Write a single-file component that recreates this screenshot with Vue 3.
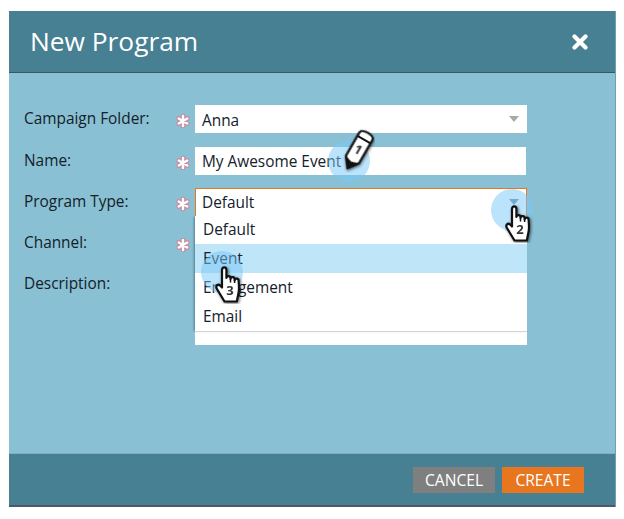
<script setup>
const rows = [
  { label: 'Campaign Folder:', req: true },
  { label: 'Name:', req: true },
  { label: 'Program Type:', req: true },
  { label: 'Channel:', req: true },
  { label: 'Description:', req: false }
]
const options = ['Default', 'Event', 'Engagement', 'Email']
</script>

<template>
  <div class="page">
    <div class="dialog">
      <header class="head">
        <h1>New Program</h1>
        <svg class="close" viewBox="0 0 16 16" width="16" height="16"><path d="M2.500 2.500l11 11M13.500 2.500l-11 11" stroke="#fff" stroke-width="4.200" fill="none" stroke-linecap="round" /></svg>
      </header>
      <main class="body">
        <div class="row" v-for="(r, i) in rows" :key="r.label" :class="'row' + i">
          <label>{{ r.label }}</label>
          <span class="req">
            <svg v-if="r.req" viewBox="0 0 16 16" width="16" height="16">
              <g stroke="#c98a9c" stroke-width="4.600" stroke-linecap="round"><path d="M8 3v10M3.700 5.500l8.600 5M12.300 5.500l-8.600 5" /></g>
              <g stroke="#fff" stroke-width="2.400" stroke-linecap="round"><path d="M8 3v10M3.700 5.500l8.600 5M12.300 5.500l-8.600 5" /></g>
            </svg>
          </span>
          <div v-if="i === 0" class="field select"><span>Anna</span><i class="caret"></i></div>
          <div v-else-if="i === 1" class="field name"><span>My Awesome Event</span></div>
          <div v-else-if="i === 2" class="field select open">
            <span>Default</span><i class="caret"></i>
            <ul class="menu">
              <li v-for="o in options" :key="o" :class="{ active: o === 'Event' }">{{ o }}</li>
            </ul>
          </div>
          <div v-else-if="i === 3" class="field"></div>
          <div v-else class="field area"></div>
        </div>
      </main>
      <footer class="foot">
        <button class="btn cancel">CANCEL</button>
        <button class="btn create">CREATE</button>
      </footer>
    </div>

    <span class="spot s1"></span>
    <span class="spot s2"></span>
    <span class="spot s3"></span>

    <svg class="pencil" viewBox="0 0 34 46" width="34" height="46">
      <g transform="rotate(30 17 23)" class="shadow">
        <path d="M9.500 7c0-5 15-5 15 0v27L17 44 9.500 34z" fill="#fff" stroke="#111" stroke-width="2.200" stroke-linejoin="round" />
        <path d="M9.500 11h15" stroke="#111" stroke-width="2" />
        <path d="M9.500 34l7.500 2.500 7.500-2.500L17 44z" fill="#111" />
        <text x="17" y="27" class="num" text-anchor="middle">1</text>
      </g>
    </svg>

    <svg v-for="h in [{ c: 'h2', n: 2 }, { c: 'h3', n: 3 }]" :key="h.c" class="hand" :class="h.c" viewBox="0 0 30 38" width="30" height="38">
      <g class="shadow">
        <path d="M7 4c0-3.600 4.400-3.600 4.400 0v8c0-2.400 4.100-2.400 4.100 0v1c0-2.400 4.100-2.400 4.100 0v1.500c0-2.400 4-2.400 4 0 .2 5 .8 8 0 12l-1.800 9H9.500L2 23c-2-3 1-5.500 3.200-3.400L7 21.500z" fill="#fff" stroke="#111" stroke-width="2.200" stroke-linejoin="round" />
        <path d="M15.500 13v3.500M19.600 14v3" stroke="#111" stroke-width="1.500" />
        <text x="15" y="29" class="num" text-anchor="middle">{{ h.n }}</text>
      </g>
    </svg>
  </div>
</template>

<style scoped>
.page {
  position: relative;
  width: 624px;
  height: 519px;
  padding: 11px 9px 0;
  box-sizing: border-box;
  background: #fff;
  overflow: hidden;
  font-family: "Open Sans", sans-serif;
  color: #14212a;
}
.dialog {
  width: 607px;
  height: 496px;
  display: flex;
  flex-direction: column;
  background: #89c0d3;
  border-right: 1px solid #6f9fb0;
  box-sizing: border-box;
}
.head {
  height: 62px;
  flex: none;
  box-sizing: border-box;
  background: #477f93;
  border-bottom: 1px solid #3e5662;
  display: flex;
  align-items: center;
  justify-content: space-between;
  padding: 0 27px 2px 21px;
}
h1 {
  margin: 0;
  font-size: 26.300px;
  font-weight: 400;
  color: #fff;
}
.close { margin-top: 3px; }
.body {
  flex: 1;
  padding-top: 32px;
  padding-left: 15px;
  display: flex;
  flex-direction: column;
  gap: 13px;
}
.row {
  display: grid;
  grid-template-columns: 148px 23px 332px;
  align-items: start;
  height: 28px;
}
.row1 { margin-top: 1px; }
.row4 { height: 75px; }
label {
  font-size: 15.400px;
  line-height: 28px;
}
.req {
  height: 28px;
  display: flex;
  align-items: center;
  justify-content: flex-start;
  padding-left: 3px;
  padding-top: 4px;
  box-sizing: border-box;
}
.field {
  position: relative;
  height: 28px;
  background: #fff;
  box-sizing: border-box;
  padding-left: 7px;
  font-size: 15.400px;
  line-height: 32px;
  color: #14212a;
}
.name { width: 331px; line-height: 29px; }
.area { height: 75px; }
.open {
  border: 1px solid #e8761f;
  border-bottom: none;
  padding-left: 6px;
  line-height: 27px;
}
.caret {
  position: absolute;
  right: 8px;
  top: 11px;
  border-left: 5.500px solid transparent;
  border-right: 5.500px solid transparent;
  border-top: 6px solid #a9a9a9;
}
.open .caret { right: 7px; top: 10px; border-top-color: #6f8fa0; }
.menu {
  position: absolute;
  z-index: 2;
  top: 27px;
  left: -1px;
  width: 332px;
  margin: 0;
  padding: 0;
  list-style: none;
  background: #fff;
  border-bottom: 1px solid #d4d4d4;
  box-shadow: -2px 0 2px -1px rgba(40, 70, 85, .55);
  clip-path: inset(0 0 -2px -4px);
}
.menu li {
  height: 29px;
  line-height: 30px;
  padding-left: 8px;
}
.menu li:first-child { height: 28px; line-height: 28px; }
.menu li.active { background: #bfe5f8; }
.foot {
  height: 54px;
  flex: none;
  box-sizing: border-box;
  background: #477f93;
  border-top: 1px solid #7fb0c2;
  border-bottom: 2px solid #4b5a64;
  display: flex;
  justify-content: flex-end;
  gap: 7px;
  padding: 13px 31px 0 0;
}
.btn {
  width: 82px;
  height: 26px;
  border: none;
  padding: 0;
  color: #fff;
  font: 400 15.600px/26px "Open Sans", sans-serif;
}
.cancel { background: #7f7f7f; }
.create { background: #e8761f; }
.spot {
  position: absolute;
  z-index: 3;
  width: 42px;
  height: 42px;
  border-radius: 50%;
  background: rgba(120, 200, 250, .5);
}
.s1 { left: 328px; top: 140px; }
.s2 { left: 491px; top: 189px; }
.s3 { left: 201px; top: 251px; }
.pencil {
  position: absolute;
  z-index: 4;
  left: 341px;
  top: 127px;
}
.hand {
  position: absolute;
  z-index: 4;
}
.h2 { left: 505px; top: 205px; }
.h3 { left: 215px; top: 266px; }
.shadow { filter: drop-shadow(1px 1px 1.500px rgba(0, 0, 0, .6)); }
.num {
  font: 700 13px "Open Sans", sans-serif;
  fill: #333;
}
</style>
